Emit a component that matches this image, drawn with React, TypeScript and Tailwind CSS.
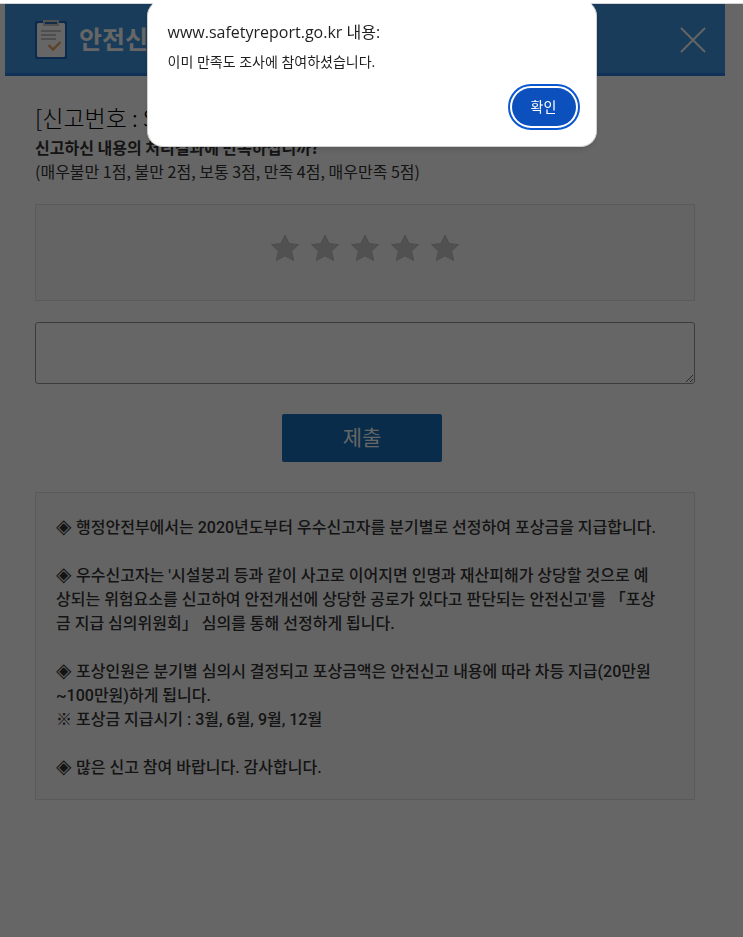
import { useState } from 'react';

interface NoticeLine {
  marker?: string;
  text: string;
}

const NOTICE_LINES: NoticeLine[] = [
  { marker: '◈', text: '행정안전부에서는 2020년도부터 우수신고자를 분기별로 선정하여 포상금을 지급합니다.' },
  { text: '' },
  { marker: '◈', text: "우수신고자는 '시설붕괴 등과 같이 사고로 이어지면 인명과 재산피해가 상당할 것으로 예" },
  { text: "상되는 위험요소를 신고하여 안전개선에 상당한 공로가 있다고 판단되는 안전신고'를 「포상" },
  { text: '금 지급 심의위원회」 심의를 통해 선정하게 됩니다.' },
  { text: '' },
  { marker: '◈', text: '포상인원은 분기별 심의시 결정되고 포상금액은 안전신고 내용에 따라 차등 지급(20만원' },
  { text: '~100만원)하게 됩니다.' },
  { text: '※ 포상금 지급시기 : 3월, 6월, 9월, 12월' },
  { text: '' },
  { marker: '◈', text: '많은 신고 참여 바랍니다. 감사합니다.' }
];

function ClipboardIcon() {
  return (
    <svg width="32" height="39" viewBox="0 0 32 39" aria-hidden="true">
      <rect width="32" height="38" y="1" rx="1" fill="#1c6ac0" />
      <rect x="2" y="3" width="28" height="34" rx="1.5" fill="#fff" />
      <rect x="8" y="0" width="16" height="6" fill="#c8c8c8" />
      <rect x="10" y="2" width="12" height="2" fill="#2a72b8" />
      <path d="M6 11h20M6 15h15M6 19h15" stroke="#c4c4c4" strokeWidth="2" />
      <path d="M13.5 25l4.5 4.5 7.5-7.5" stroke="#e8a860" strokeWidth="2.4" fill="none" />
    </svg>
  );
}

function StarRating() {
  const [score, setScore] = useState(0);

  return (
    <fieldset className="flex h-[97px] items-start justify-center gap-3 border border-[#e2e2e2] bg-[#fafafa] pt-[29px]">
      {[1, 2, 3, 4, 5].map(value => (
        <label key={value} className="relative block cursor-pointer">
          <input
            type="radio"
            name="score"
            value={value}
            aria-label={`${value}점`}
            checked={score === value}
            onChange={() => setScore(value)}
            className="sr-only"
          />
          <svg width="28" height="27" viewBox="0 0 28 27" aria-hidden="true">
            <path
              d="M14 1l4 8.6 9.5 1-7 6.4 2.2 9.4-8.7-4.6-8.7 4.6L7.5 17l-7-6.4 9.5-1z"
              fill={value <= score ? '#f5b301' : '#cacaca'}
              stroke={value <= score ? '#e09f00' : '#bdbdbd'}
            />
          </svg>
        </label>
      ))}
    </fieldset>
  );
}

function AlertDialog({ onConfirm }: { onConfirm: () => void }) {
  return (
    <div
      role="alertdialog"
      aria-labelledby="alert-title"
      aria-describedby="alert-message"
      className="fixed top-0 left-1/2 flex h-[147px] w-[450px] -translate-x-1/2 flex-col rounded-2xl border border-t-white border-[#d0d0d0] bg-white px-5 pt-[19px] font-['Open_Sans','Noto_Sans_CJK_KR',sans-serif] text-[#1f1f1f] shadow-md"
    >
      <h2 id="alert-title" className="text-base leading-6">www.safetyreport.go.kr 내용:</h2>
      <p id="alert-message" className="mt-2 text-sm leading-5">이미 만족도 조사에 참여하셨습니다.</p>
      <button
        type="button"
        onClick={onConfirm}
        className="mt-4 h-[38px] w-16 self-end rounded-full bg-[#0b50bd] text-sm text-white outline-2 outline-offset-2 outline-[#0b57d0]"
      >
        확인
      </button>
    </div>
  );
}

export default function App() {
  const [alertOpen, setAlertOpen] = useState(true);

  return (
    <div className="min-h-screen bg-white pt-1 font-['Noto_Sans_CJK_KR',sans-serif] text-[#333]">
      <div className="mr-[18px] ml-[5px]">
        <header className="flex h-[72px] items-center justify-between border-b-3 border-[#2b7ad6] bg-[#3c96de] px-[30px] pt-0.5">
          <div className="flex items-center gap-3">
            <ClipboardIcon />
            <h1 className="pb-1 text-[25px] leading-8 font-bold text-white">안전신</h1>
          </div>
          <button type="button" aria-label="닫기" className="-mr-3">
            <svg width="28" height="28" viewBox="0 0 28 28" aria-hidden="true">
              <path d="M2 2l24 24M26 2L2 26" stroke="#fff" strokeWidth="1.8" fill="none" />
            </svg>
          </button>
        </header>

        <main className="px-[30px] pt-[25px]">
          <h2 className="mb-0.5 text-[23px] leading-8 font-light text-black">[신고번호 : S</h2>
          <p className="text-base leading-6 font-bold">신고하신 내용의 처리결과에 만족하십니까?</p>
          <p className="text-base leading-6">(매우불만 1점, 불만 2점, 보통 3점, 만족 4점, 매우만족 5점)</p>

          <form className="mt-[21px]" onSubmit={e => e.preventDefault()}>
            <StarRating />
            <textarea
              aria-label="의견"
              className="mt-[21px] block h-[62px] w-full rounded-[3px] border border-[#969696] bg-white p-2"
            />
            <div className="mt-[30px] flex justify-center pr-1.5">
              <button type="submit" className="h-12 w-40 rounded-xs bg-[#146eb7] pb-0.5 text-[21px] text-white">
                제출
              </button>
            </div>
          </form>

          <section className="mt-[30px] border border-[#e2e2e2] bg-[#fafafa] px-5 pt-[23px] pb-[19px] font-['Roboto','Noto_Sans_CJK_KR',sans-serif] text-base leading-6 font-medium">
            {NOTICE_LINES.map((line, i) => (
              <p key={i} className="flex min-h-6">
                {line.marker && <span className="w-5 text-xl leading-5">{line.marker}</span>}
                <span>{line.text}</span>
              </p>
            ))}
          </section>
        </main>
      </div>

      {alertOpen && (
        <>
          <div className="fixed inset-x-0 top-1 bottom-0 bg-black/60" />
          <div className="fixed inset-x-0 top-[3px] h-px bg-[#d5d5d5]" />
          <AlertDialog onConfirm={() => setAlertOpen(false)} />
        </>
      )}
    </div>
  );
}
